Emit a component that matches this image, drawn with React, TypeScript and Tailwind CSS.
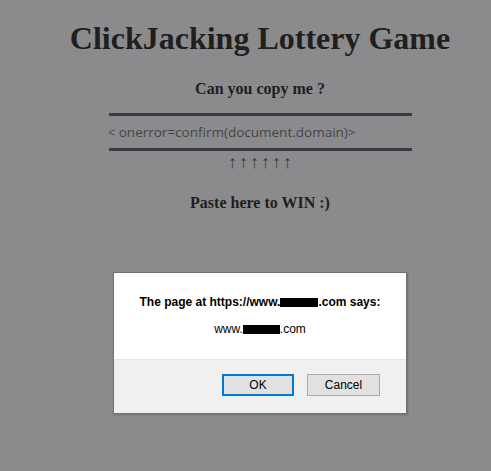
export default function App() {
  return (
    <div className="relative h-[471px] w-full overflow-hidden bg-[#8b8b8d] pl-[29px] text-center">
      {/* Page */}
      <h1 className="pt-[20px] font-['Liberation_Serif',serif] text-[32px] font-bold leading-[37px] text-[#1f1f20]">
        ClickJacking Lottery Game
      </h1>
      <p className="mt-[22px] font-['Liberation_Serif',serif] text-[16px] font-bold leading-[20px] text-[#1f1f20]">
        Can you copy me ?
      </p>
      <div className="mx-auto mt-[14px] w-[303px] overflow-hidden border-y-[3px] border-[#3b3d40] text-left">
        <div className="-ml-[1px] whitespace-nowrap py-[7px] font-['Open_Sans',sans-serif] text-[13.5px] leading-[18px] text-[#444548]">
          &lt; onerror=confirm(document.domain)&gt;
        </div>
      </div>
      <div className="mt-[1px] pl-[2px] font-['Liberation_Sans',sans-serif] text-[18px] leading-[21px] tracking-[2px] text-[#3a3b3d]">
        ↑↑↑↑↑↑
      </div>
      <p className="mt-[20px] font-['Liberation_Serif',serif] text-[16px] font-bold leading-[20px] text-[#1f1f20]">
        Paste here to WIN :)
      </p>

      {/* Browser alert */}
      <div className="absolute left-[113px] top-[272px] flex h-[142px] w-[294px] flex-col border border-[#707070] bg-white text-left font-['Liberation_Sans',Arial,sans-serif] text-[12px] text-black shadow-[1px_1px_2px_rgba(0,0,0,0.2)]">
        <div className="flex h-[86px] flex-col items-center pt-[22px]">
          <div className="flex items-center font-bold leading-[14px]">
            <span>The page at https://www.</span>
            <span className="inline-block h-[9px] w-[38px] bg-black" />
            <span>.com says:</span>
          </div>
          <div className="mt-[13px] flex items-center leading-[14px]">
            <span>www.</span>
            <span className="inline-block h-[9px] w-[37px] bg-black" />
            <span>.com</span>
          </div>
        </div>
        <div className="flex flex-1 items-start justify-end gap-[13px] border-t border-[#e6e6e6] bg-[#f0f0f0] pr-[26px] pt-[14px]">
          <button className="h-[22px] w-[72px] border-2 border-[#0078d7] bg-[#e1e1e1] text-[12px] leading-[18px] text-black">
            OK
          </button>
          <button className="h-[22px] w-[73px] border border-[#adadad] bg-[#e1e1e1] text-[12px] leading-[20px] text-black">
            Cancel
          </button>
        </div>
      </div>
    </div>
  );
}
